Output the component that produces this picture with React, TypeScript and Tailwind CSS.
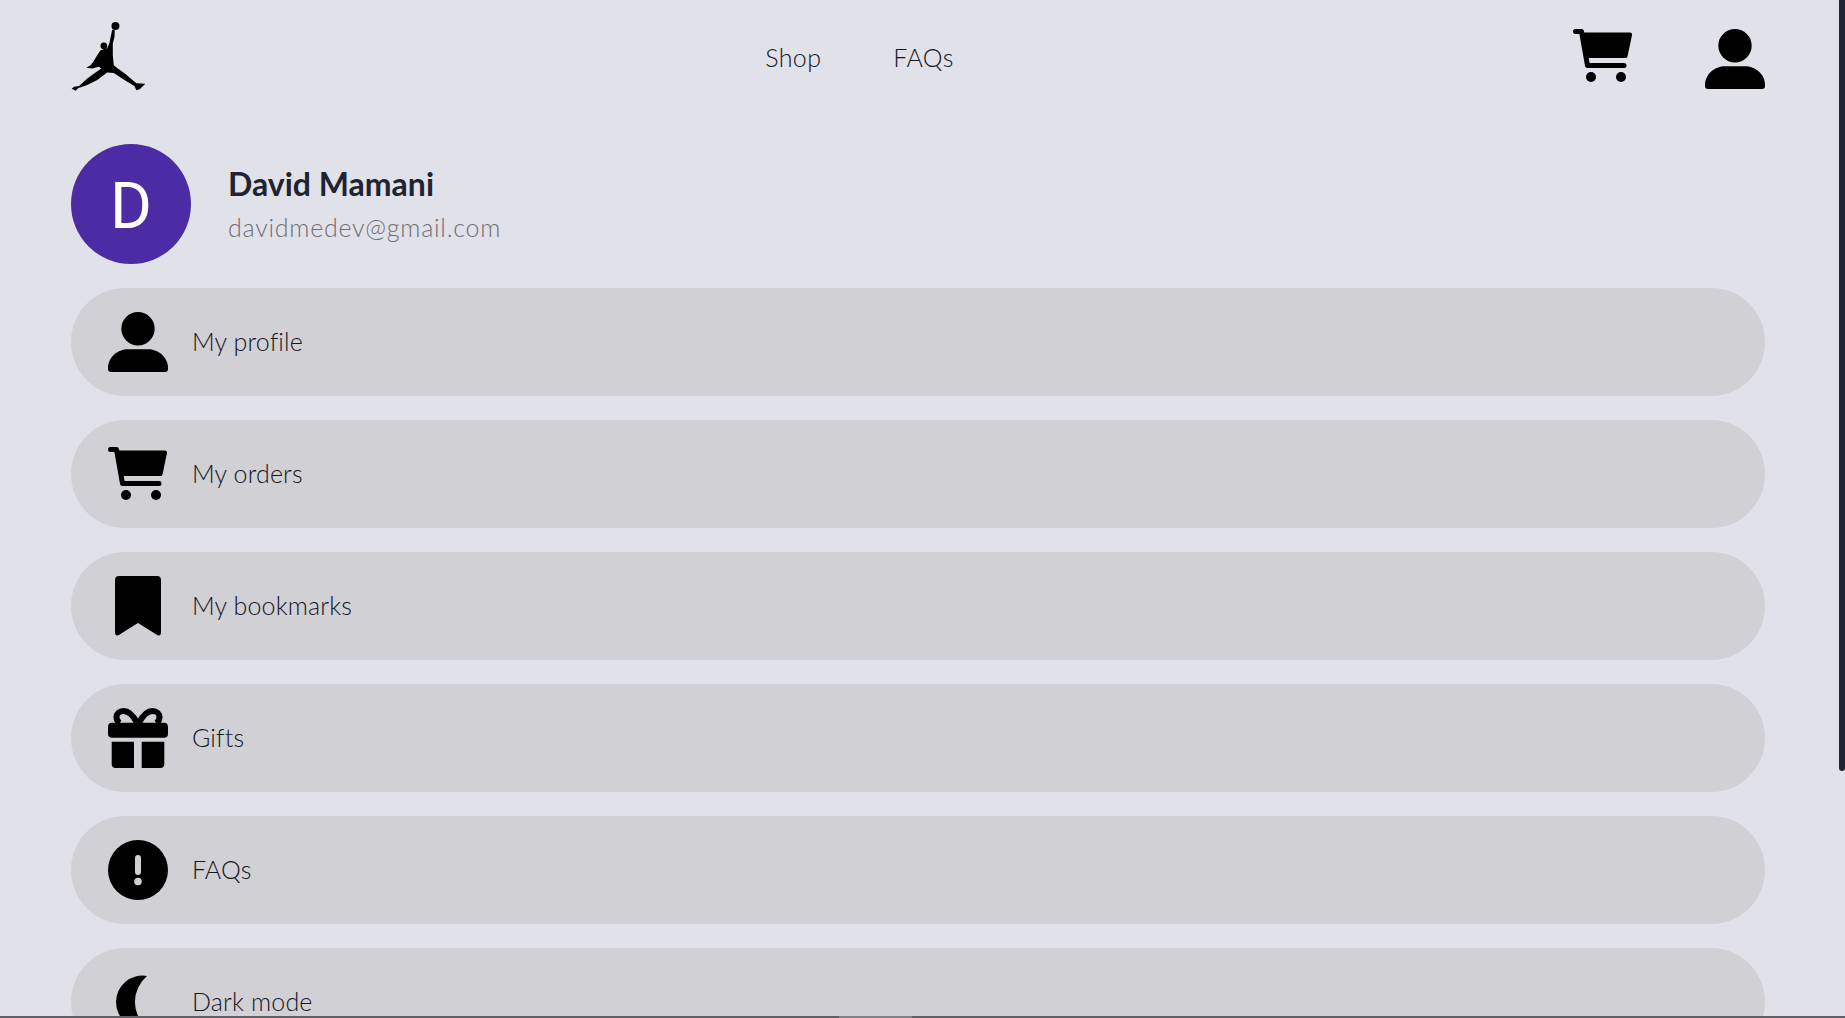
import React from 'react';

const CartIcon = () => (
  <svg viewBox="0 0 60 60" className="w-[60px] h-[60px] shrink-0">
    <path d="M2.5 5.5H8.5L14.5 39.5H51" fill="none" stroke="#000" strokeWidth="5" strokeLinecap="round" strokeLinejoin="round" />
    <path d="M9 6.5H57a2 2 0 0 1 2 2.5L54.5 30.5a2 2 0 0 1-2 1.5H13Z" fill="#000" />
    <circle cx="18" cy="51" r="5" fill="#000" />
    <circle cx="48" cy="51" r="5" fill="#000" />
  </svg>
);

const UserIcon = () => (
  <svg viewBox="0 0 60 60" className="w-[60px] h-[60px] shrink-0">
    <circle cx="30" cy="16.7" r="16.7" fill="#000" />
    <path d="M0 56C0 45 10 37.3 20 37.3H40C50 37.3 60 45 60 56V57a3 3 0 0 1-3 3H3a3 3 0 0 1-3-3Z" fill="#000" />
  </svg>
);

const BookmarkIcon = () => (
  <svg viewBox="0 0 60 60" className="w-[60px] h-[60px] shrink-0">
    <path d="M7 4a4 4 0 0 1 4-4H49a4 4 0 0 1 4 4V57a2.5 2.5 0 0 1-3.8 2.1L30 47L10.8 59.1A2.5 2.5 0 0 1 7 57Z" fill="#000" />
  </svg>
);

const GiftIcon = () => (
  <svg viewBox="0 0 60 60" className="w-[60px] h-[60px] shrink-0">
    <path d="M29 15C25 7 20 3 15.5 3C11 3 8.5 6 8.5 9C8.5 12 10 14 12 15" fill="none" stroke="#000" strokeWidth="6" />
    <path d="M31 15C35 7 40 3 44.5 3C49 3 51.5 6 51.5 9C51.5 12 50 14 48 15" fill="none" stroke="#000" strokeWidth="6" />
    <rect x="0" y="14.7" width="60" height="15" rx="4" fill="#000" />
    <path d="M3.7 33.7H26V60H7.7a4 4 0 0 1-4-4Z" fill="#000" />
    <path d="M33.7 33.7H56.3V56a4 4 0 0 1-4 4H33.7Z" fill="#000" />
  </svg>
);

const AlertIcon = () => (
  <svg viewBox="0 0 60 60" className="w-[60px] h-[60px] shrink-0">
    <circle cx="30" cy="30" r="30" fill="#000" />
    <rect x="27" y="15" width="6" height="20" rx="3" fill="#d1d0d5" />
    <circle cx="30" cy="41.5" r="3.8" fill="#d1d0d5" />
  </svg>
);

const MoonIcon = () => (
  <svg viewBox="0 0 60 60" className="w-[60px] h-[60px] shrink-0">
    <path d="M39 4A26.4 26.4 0 1 0 39 56A34 34 0 0 1 39 4Z" fill="#000" />
  </svg>
);

// jumpman silhouette, traced by hand
const JumpmanLogo = () => (
  <svg viewBox="62 65 224 208" className="w-[75px] h-[69px] shrink-0 mb-[6px]">
    <circle cx="195" cy="77" r="12" fill="#000" />
    <circle cx="160" cy="137" r="10" fill="#000" />
    <path
      d="M185 88L193 90L192 110L187 130L187 165L190 195L202 205L225 222L258 250L285 251L268 268L258 271L252 258L222 240L190 219L170 217L140 240L110 255L82 265L75 272L63 266L70 260L85 258L110 235L135 217L152 205L145 200L125 205L107 203L120 195L128 185L140 165L150 150L170 144L177 128L181 108Z"
      fill="#000"
    />
  </svg>
);

const menuItems = [
  { label: 'My profile', icon: <UserIcon /> },
  { label: 'My orders', icon: <CartIcon /> },
  { label: 'My bookmarks', icon: <BookmarkIcon /> },
  { label: 'Gifts', icon: <GiftIcon /> },
  { label: 'FAQs', icon: <AlertIcon /> },
  { label: 'Dark mode', icon: <MoonIcon /> },
];

export default function App() {
  return (
    <div className="relative h-screen overflow-hidden bg-[#e0e1e9] font-['Lato','Open_Sans',sans-serif] text-[#14171f]">
      <div className="pl-[71px] pr-[80px]">
        <header className="h-[118px] flex items-center justify-between">
          <JumpmanLogo />
          <nav className="flex items-center gap-[72px] text-[25px] tracking-[0.4px] font-light mb-[2px]">
            <a>Shop</a>
            <a>FAQs</a>
          </nav>
          <div className="flex items-center gap-[72px]">
            <div className="mb-[6px]">
              <CartIcon />
            </div>
            <UserIcon />
          </div>
        </header>

        <section className="mt-[26px] flex items-center gap-[37px]">
          <div className="w-[120px] h-[120px] rounded-full bg-[#4c2ca5] flex items-center justify-center pt-[5px] text-white text-[64px] leading-none font-['Roboto',sans-serif]">
            D
          </div>
          <div className="flex flex-col gap-[8px]">
            <h2 className="text-[32px] leading-9 font-bold text-[#1f2430] mb-[1px]">David Mamani</h2>
            <p className="text-[25px] leading-8 tracking-[0.75px] font-light text-[#6f6f75]">davidmedev@gmail.com</p>
          </div>
        </section>

        <ul className="mt-[24px] flex flex-col gap-6">
          {menuItems.map((item) => (
            <li key={item.label} className="h-[108px] rounded-[54px] bg-[#d1d0d5] pl-[37px] flex items-center gap-[24px]">
              {item.icon}
              <span className="text-[25px] tracking-[0.15px] font-light mb-[1px]">{item.label}</span>
            </li>
          ))}
        </ul>
      </div>

      {/* scrollbar thumb */}
      <div className="absolute top-0 right-0 w-[6px] h-[771px] bg-[#1f2430] rounded-b-[3px]" />

      {/* thin strip along the bottom edge of the window */}
      <div className="absolute bottom-0 left-0 right-0 h-[2px] flex bg-[#5e5e64]">
        <div className="ml-[839px] w-[73px] bg-[#808086]" />
      </div>
    </div>
  );
}
